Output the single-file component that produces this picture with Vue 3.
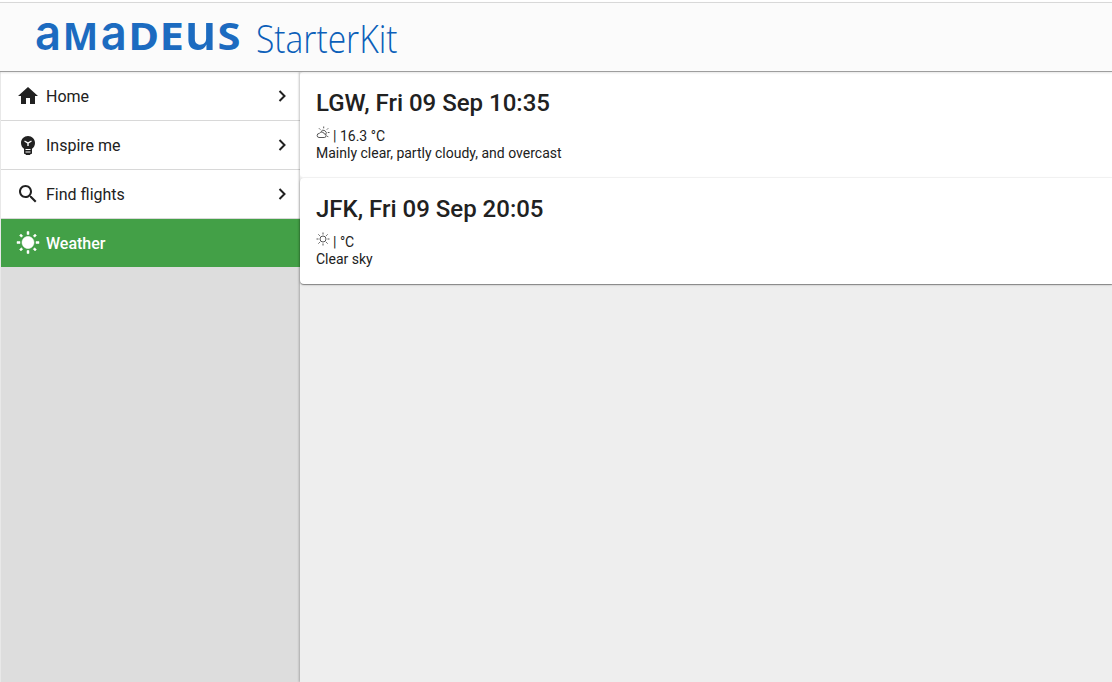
<script setup>
const navItems = [
  { label: 'Home', icon: 'home' },
  { label: 'Inspire me', icon: 'bulb' },
  { label: 'Find flights', icon: 'search' },
  { label: 'Weather', icon: 'sun', active: true }
]

const iconPaths = {
  home: 'M10 20v-6h4v6h5v-8h3L12 3 2 12h3v8z',
  bulb: 'M12 3C8.100 3 5 6.100 5 10c0 2.600 1.300 4.600 3 5.800V20c0 .6.400 1 1 1h.5c0 .6.500 1 1 1h3c.5 0 1-.4 1-1h.5c.6 0 1-.4 1-1v-4.200c1.700-1.200 3-3.200 3-5.800 0-3.900-3.100-7-7-7zM8.800 7.500l3.200 1.800 3.200-1.800.6 1.100-3.100 1.900V13h-1.400v-2.500L8.200 8.600zM9.500 16h5v1h-5zM9.500 18.500h5v1h-5z',
  search: 'M15.500 14h-.79l-.28-.27C15.410 12.590 16 11.110 16 9.500 16 5.910 13.090 3 9.500 3S3 5.910 3 9.500 5.910 16 9.500 16c1.610 0 3.090-.59 4.230-1.570l.27.28v.79l5 4.990L20.490 19l-4.990-5zm-6 0C7.010 14 5 11.990 5 9.500S7.010 5 9.500 5 14 7.010 14 9.500 11.990 14 9.500 14z',
  sun: 'M6.760 4.840l-1.800-1.790-1.410 1.410 1.790 1.790 1.420-1.410zM4 10.500H1v2h3v-2zm9-9.950h-2V3.500h2V.55zm7.450 3.910l-1.410-1.410-1.790 1.790 1.410 1.410 1.790-1.790zm-3.210 13.700l1.790 1.800 1.410-1.410-1.800-1.790-1.400 1.400zM20 10.500v2h3v-2h-3zm-8-5c-3.310 0-6 2.690-6 6s2.690 6 6 6 6-2.690 6-6-2.690-6-6-6zm-1 16.950h2V19.500h-2v2.950zm-7.450-3.910l1.410 1.410 1.790-1.800-1.410-1.410-1.790 1.800z'
}

const brandLetters = [
  { char: 'a', x: 35, size: 48.5, length: 26, round: true },
  { char: 'M', x: 62.8, size: 38, length: 35.5 },
  { char: 'a', x: 100.8, size: 48.5, length: 26, round: true },
  { char: 'D', x: 128.5, size: 38, length: 30.5 },
  { char: 'E', x: 159.5, size: 38, length: 24.5 },
  { char: 'u', x: 185, size: 48.5, length: 31, round: true },
  { char: 'S', x: 217.5, size: 38, length: 23 }
]

const reports = [
  {
    title: 'LGW, Fri 09 Sep 10:35',
    icon: 'cloudy',
    temperature: '16.3 °C',
    summary: 'Mainly clear, partly cloudy, and overcast'
  },
  { title: 'JFK, Fri 09 Sep 20:05', icon: 'clear', temperature: '°C', summary: 'Clear sky' }
]
</script>

<template>
  <div class="page">
    <header class="topbar">
      <svg class="logo" width="420" height="68" viewBox="0 3 420 68">
        <text
          v-for="letter in brandLetters"
          :key="letter.x"
          class="brand"
          :class="{ round: letter.round }"
          :x="letter.x"
          y="50"
          :font-size="letter.size"
          :textLength="letter.length"
          lengthAdjust="spacingAndGlyphs"
        >{{ letter.char }}</text>
        <text class="product" x="256" y="52.500" textLength="141.500" lengthAdjust="spacingAndGlyphs">StarterKit</text>
      </svg>
    </header>
    <div class="body">
      <nav class="sidebar">
        <a v-for="item in navItems" :key="item.label" class="item" :class="{ active: item.active }">
          <svg class="item-icon" viewBox="0 0 24 24"><path :d="iconPaths[item.icon]" fill-rule="evenodd" /></svg>
          <span class="label">{{ item.label }}</span>
          <svg v-if="!item.active" class="chevron" viewBox="0 0 12 14"><path d="M3.500 2l5 5-5 5" /></svg>
        </a>
      </nav>
      <main class="content">
        <section v-for="report in reports" :key="report.title" class="card">
          <h2>{{ report.title }}</h2>
          <p class="reading">
            <svg class="weather" viewBox="0 0 14 14">
              <template v-if="report.icon === 'cloudy'">
                <path d="M5 5.600a2.800 2.800 0 1 1 4.800 3M7.700.5v1.800M3 2.300l1.300 1.300M12.200 2.300l-1.300 1.300M11.800 6.500H13.500M11 9.800l1.300 1.300" />
                <path d="M3 11.500h5.300a1.800 1.800 0 0 0 0-3.600A2.700 2.700 0 0 0 3.300 7.500a2 2 0 0 0-.3 4z" />
              </template>
              <template v-else>
                <circle cx="7" cy="7" r="3" />
                <path d="M7 .5v2M7 11.500v2M.5 7h2M11.500 7h2M2.400 2.400l1.400 1.400M10.200 10.200l1.400 1.400M2.400 11.600l1.400-1.400M10.200 3.800l1.400-1.400" />
              </template>
            </svg>
            <span>| {{ report.temperature }}</span>
          </p>
          <p>{{ report.summary }}</p>
        </section>
      </main>
    </div>
  </div>
</template>

<style>
body {
  margin: 0;
}
</style>

<style scoped>
.page {
  box-sizing: border-box;
  display: flex;
  flex-direction: column;
  height: 682px;
  overflow: hidden;
  padding-top: 2px;
  background: #fff;
  color: #212121;
  font-family: Roboto, sans-serif;
}
.topbar {
  position: relative;
  z-index: 3;
  box-sizing: border-box;
  flex: none;
  height: 70px;
  border-top: 1px solid #d8d8d8;
  border-bottom: 1px solid #9e9e9e;
  background: #fbfbfb;
  box-shadow: 0 1px 2px rgba(0, 0, 0, 0.1);
}
.logo {
  display: block;
  overflow: visible;
}
.brand {
  fill: #1c6bc0;
  font-family: "Noto Sans", sans-serif;
  font-weight: 700;
}
.brand.round {
  font-family: Inter, sans-serif;
  font-weight: 600;
}
.product {
  fill: #0b5fb9;
  font-family: "Open Sans", sans-serif;
  font-size: 39px;
  font-weight: 300;
}
.body {
  display: flex;
  flex: 1;
  min-height: 0;
}
.sidebar {
  box-sizing: border-box;
  width: 300px;
  border-left: 1px solid #e8e8e8;
  background: #ddd;
}
.item {
  box-sizing: border-box;
  display: flex;
  align-items: center;
  height: 49px;
  padding: 0 12px 0 15px;
  border-bottom: 1px solid #d8d8d8;
  background: #fff;
  font-size: 16px;
}
.item.active {
  height: 48px;
  border-bottom: 0;
  background: #43a047;
  color: #fff;
  font-weight: 500;
}
.item-icon {
  width: 24px;
  height: 24px;
  fill: currentColor;
}
.item.active .item-icon {
  stroke: currentColor;
  stroke-width: 0.500;
}
.label {
  flex: 1;
  margin-left: 6px;
}
.chevron {
  width: 12px;
  height: 14px;
  fill: none;
  stroke: #212121;
  stroke-width: 2;
}
.content {
  position: relative;
  z-index: 2;
  flex: 1;
  background: #eee;
  box-shadow: -1px 0 2px rgba(0, 0, 0, 0.24);
}
.card {
  box-sizing: border-box;
  height: 106px;
  padding: 16px;
  border-radius: 4px 0 0 4px;
  background: #fff;
}
.card:first-child {
  border-bottom: 1px solid #f5f5f5;
}
.card:last-child {
  box-shadow: 0 1px 1px rgba(0, 0, 0, 0.4), 0 1px 3px rgba(0, 0, 0, 0.12);
}
.card h2 {
  margin: 0 0 9px;
  font-size: 24px;
  font-weight: 500;
  line-height: 31px;
}
.card p {
  margin: 0;
  font-size: 14px;
  line-height: 17px;
}
.reading {
  display: flex;
  gap: 3px;
}
.weather {
  width: 14px;
  height: 14px;
  margin-top: -2px;
  fill: none;
  stroke: #444;
  stroke-width: 0.900;
}
</style>
